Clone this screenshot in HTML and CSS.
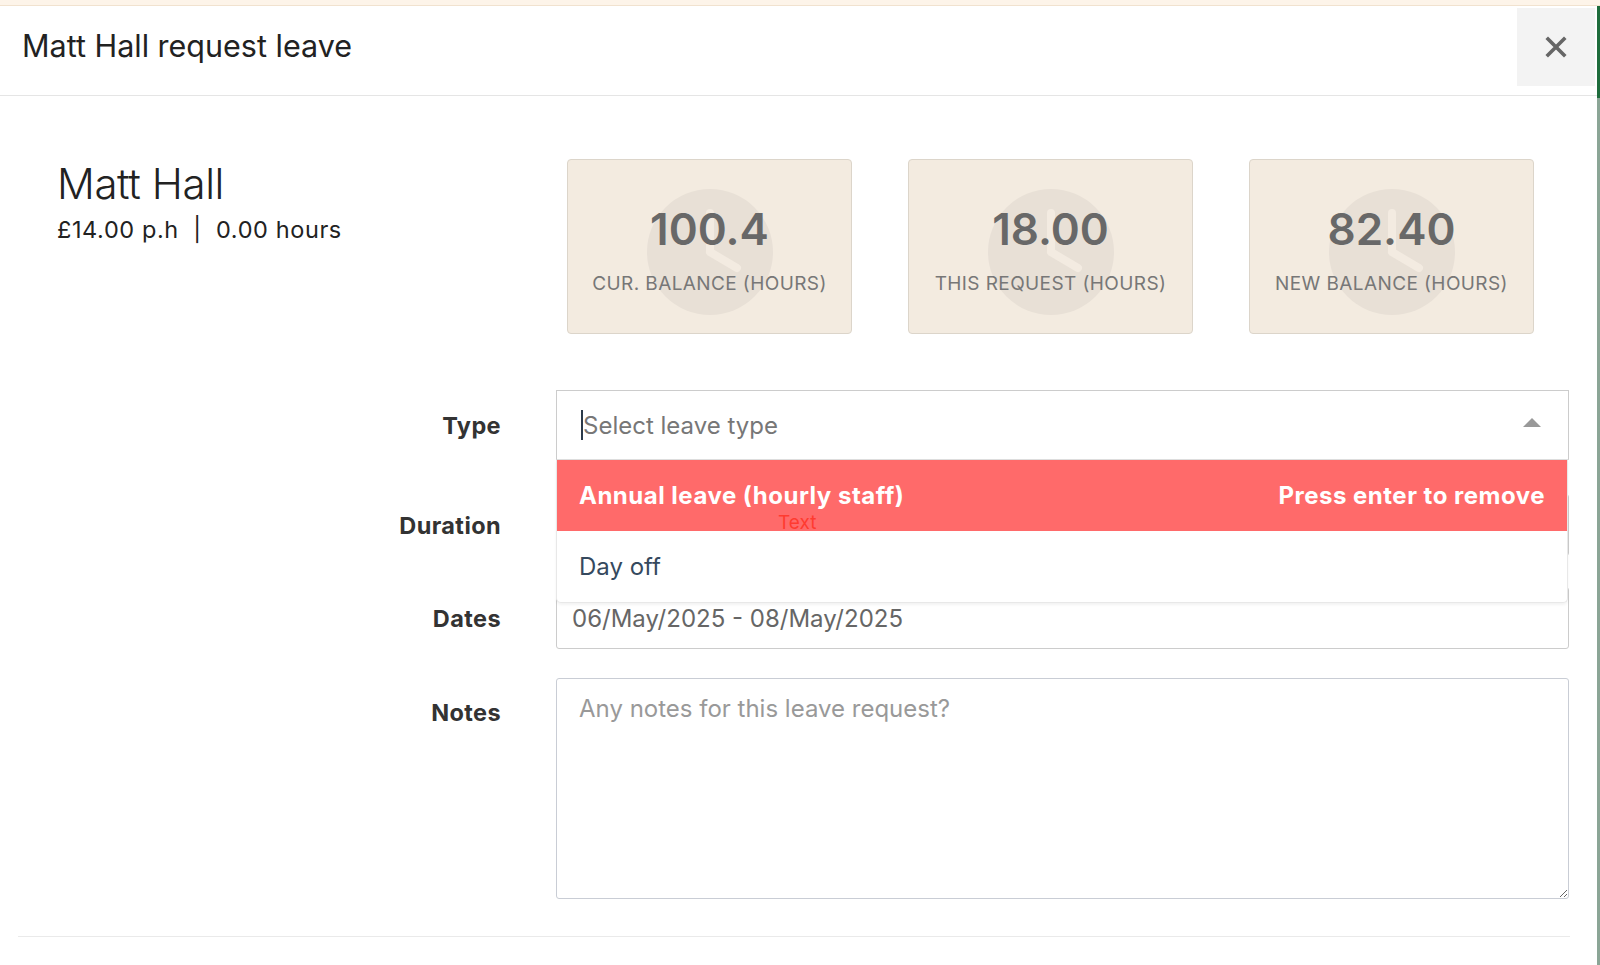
FILE: index.html
```html
<!DOCTYPE html>
<html>
<head>
  <title>Request leave</title>
  <meta charset="utf-8">
  <meta name="viewport" content="width=device-width, initial-scale=1">
  <link rel="stylesheet" href="styles.css">
</head>
<body>

  <div class="topbar"></div>

  <div class="shell">
    <div class="modal">

      <div class="modal-header">
        <h4 class="modal-title">Matt Hall request leave</h4>
        <button class="close" type="button" aria-label="Close">
          <svg width="22" height="22" viewBox="0 0 22 22">
            <path d="M3 3 L19 19 M19 3 L3 19" stroke="#666" stroke-width="3.6" stroke-linecap="square"/>
          </svg>
        </button>
      </div>

      <div class="modal-body">

        <!-- who + balances -->
        <div class="summary">
          <div class="staff">
            <div class="staff-name">Matt Hall</div>
            <div class="staff-meta">£14.00 p.h &nbsp;|&nbsp; 0.00 hours</div>
          </div>

          <div class="cards">
            <div class="card">
              <svg class="clock" width="130" height="130" viewBox="0 0 130 130">
                <circle cx="65" cy="65" r="63" fill="#e8e0d6"/>
                <path d="M65 65 L65 26 M65 65 L92 81" stroke="#f3ebe1" stroke-width="8" stroke-linecap="round" fill="none"/>
              </svg>
              <div class="card-value">100.4</div>
              <div class="card-label">Cur. balance (hours)</div>
            </div>
            <div class="card">
              <svg class="clock" width="130" height="130" viewBox="0 0 130 130">
                <circle cx="65" cy="65" r="63" fill="#e8e0d6"/>
                <path d="M65 65 L65 26 M65 65 L92 81" stroke="#f3ebe1" stroke-width="8" stroke-linecap="round" fill="none"/>
              </svg>
              <div class="card-value">18.00</div>
              <div class="card-label">This request (hours)</div>
            </div>
            <div class="card">
              <svg class="clock" width="130" height="130" viewBox="0 0 130 130">
                <circle cx="65" cy="65" r="63" fill="#e8e0d6"/>
                <path d="M65 65 L65 26 M65 65 L92 81" stroke="#f3ebe1" stroke-width="8" stroke-linecap="round" fill="none"/>
              </svg>
              <div class="card-value">82.40</div>
              <div class="card-label">New balance (hours)</div>
            </div>
          </div>
        </div>

        <!-- the form -->
        <div class="form">

          <div class="form-row row-type">
            <label class="form-label">Type</label>
            <div class="field">
              <div class="multiselect">
                <span class="caret-line"></span><span class="placeholder">Select leave type</span>
                <span class="arrow"></span>
              </div>
              <ul class="options">
                <li class="option option-hl">
                  <span>Annual leave (hourly staff)</span>
                  <span>Press enter to remove</span>
                  <span class="debug">Text</span>
                </li>
                <li class="option">Day off</li>
              </ul>
            </div>
          </div>

          <div class="form-row row-duration">
            <label class="form-label">Duration</label>
            <div class="field">
              <div class="input">Full days</div>
            </div>
          </div>

          <div class="form-row row-dates">
            <label class="form-label">Dates</label>
            <div class="field">
              <input class="input" type="text" value="06/May/2025 - 08/May/2025">
            </div>
          </div>

          <div class="form-row row-notes">
            <label class="form-label">Notes</label>
            <div class="field">
              <textarea class="notes" placeholder="Any notes for this leave request?"></textarea>
            </div>
          </div>

        </div>
      </div>

      <div class="modal-footer"></div>
    </div>

    <div class="edge"></div>
  </div>

</body>
</html>
```

FILE: styles.css
```css
* {
  box-sizing: border-box;
}

body {
  margin: 0;
  background-color: #8ba596;
  font-family: Inter, "Noto Sans", "Liberation Sans", sans-serif;
  color: #333;
}

.topbar {
  height: 6px;
  background-color: #fdf4e9;
  border-bottom: 1px solid #f1e2cf;
}

.shell {
  display: flex;
  height: 959px;
}

.modal {
  flex: 1;
  background-color: #fff;
}

.edge {
  width: 3px;
  background: linear-gradient(#1e6c3c 0, #1e6c3c 92px, #8ba596 92px);
}

/* header */
.modal-header {
  display: flex;
  justify-content: space-between;
  height: 90px;
  border-bottom: 1px solid #e5e5e5;
}
.modal-title {
  margin: 0;
  padding: 0 0 0 22px;
  align-self: center;
  font-size: 30.5px;
  font-weight: 400;
  color: #222;
  margin-top: -10px;
}
.close {
  width: 78px;
  height: 78px;
  margin: 2px 2px 0 0;
  border: 0;
  background-color: #f3f3f3;
  display: flex;
  align-items: center;
  justify-content: center;
  padding: 0;
}

/* summary */
.summary {
  display: flex;
  padding-top: 63px;
}
.staff {
  width: 567px;
  padding-left: 57px;
}
.staff-name {
  font-size: 42px;
  font-weight: 300;
  line-height: 50px;
  color: #222;
  letter-spacing: -0.4px;
}
.staff-meta {
  margin-top: 6px;
  font-size: 23.5px;
  line-height: 30px;
  color: #222;
  letter-spacing: 0.6px;
}

.cards {
  display: flex;
  gap: 56px;
}
.card {
  position: relative;
  width: 285px;
  height: 175px;
  background-color: #f3ebe0;
  border: 1px solid #dcd5ca;
  border-radius: 4px;
  text-align: center;
  padding-top: 43px;
  overflow: hidden;
}
.clock {
  position: absolute;
  left: 77px;
  top: 27px;
}
.card-value {
  position: relative;
  font-size: 44px;
  line-height: 52px;
  font-weight: 600;
  color: #686868;
}
.card-label {
  position: relative;
  margin-top: 17px;
  font-size: 19px;
  line-height: 24px;
  color: #777;
  text-transform: uppercase;
  letter-spacing: 0.4px;
}

/* form */
.form {
  margin-top: 56px;
  padding-right: 28px;
}
.form-row {
  display: grid;
  grid-template-columns: 501px 1fr;
  column-gap: 55px;
  align-items: center;
}
.form-label {
  text-align: right;
  font-size: 23.5px;
  font-weight: 700;
  color: #333;
  letter-spacing: 0.4px;
}
.field {
  position: relative;
}

.multiselect {
  height: 70px;
  border: 1px solid #ccc;
  border-bottom-color: #ddd;
  display: flex;
  align-items: center;
  padding-left: 24px;
  font-size: 24px;
  color: #777;
}
.caret-line {
  display: inline-block;
  width: 2px;
  height: 30px;
  background-color: #2b3a4a;
  margin-right: 0;
}
.arrow {
  margin-left: auto;
  margin-right: 27px;
  width: 0;
  height: 0;
  border-left: 9px solid transparent;
  border-right: 9px solid transparent;
  border-bottom: 9px solid #999;
  margin-top: -5px;
}

/* open dropdown sits over the next row */
.options {
  position: absolute;
  z-index: 5;
  left: 0;
  right: 1px;
  top: 70px;
  margin: 0;
  padding: 0;
  list-style: none;
  background-color: #fff;
  border: 1px solid #e8e8e8;
  border-top: 0;
  border-radius: 0 0 5px 5px;
  box-shadow: 0 2px 3px rgba(0, 0, 0, 0.05);
}
.option {
  height: 71px;
  display: flex;
  align-items: center;
  padding: 0 22px 0 22px;
  font-size: 24px;
  color: #35495e;
}
.option-hl {
  position: relative;
  justify-content: space-between;
  background-color: #ff6a6a;
  color: #fff;
  font-weight: 700;
  letter-spacing: 0.5px;
}
.debug {
  position: absolute;
  left: 221px;
  top: 51px;
  font-size: 19px;
  font-weight: 400;
  letter-spacing: 0;
  color: #ff3b30;
}

.input {
  display: block;
  width: 100%;
  height: 62px;
  border: 1px solid #ccc;
  border-radius: 3px;
  padding: 0 15px;
  font-family: inherit;
  font-size: 24px;
  line-height: 60px;
  color: #666;
  background-color: #fff;
}

.row-duration {
  margin-top: 34px;
}
.row-dates {
  margin-top: 31px;
}
.row-notes {
  margin-top: 29px;
  align-items: start;
}
.row-notes .form-label {
  padding-top: 20px;
}
.notes {
  display: block;
  width: 100%;
  height: 221px;
  border: 1px solid #c9cdd5;
  border-radius: 3px;
  padding: 15px 22px;
  font-family: inherit;
  font-size: 24px;
  color: #555;
  resize: vertical;
}
.notes::placeholder {
  color: #999;
}

.modal-footer {
  margin: 37px 27px 0 18px;
  border-top: 1px solid #eaeaea;
}
```
